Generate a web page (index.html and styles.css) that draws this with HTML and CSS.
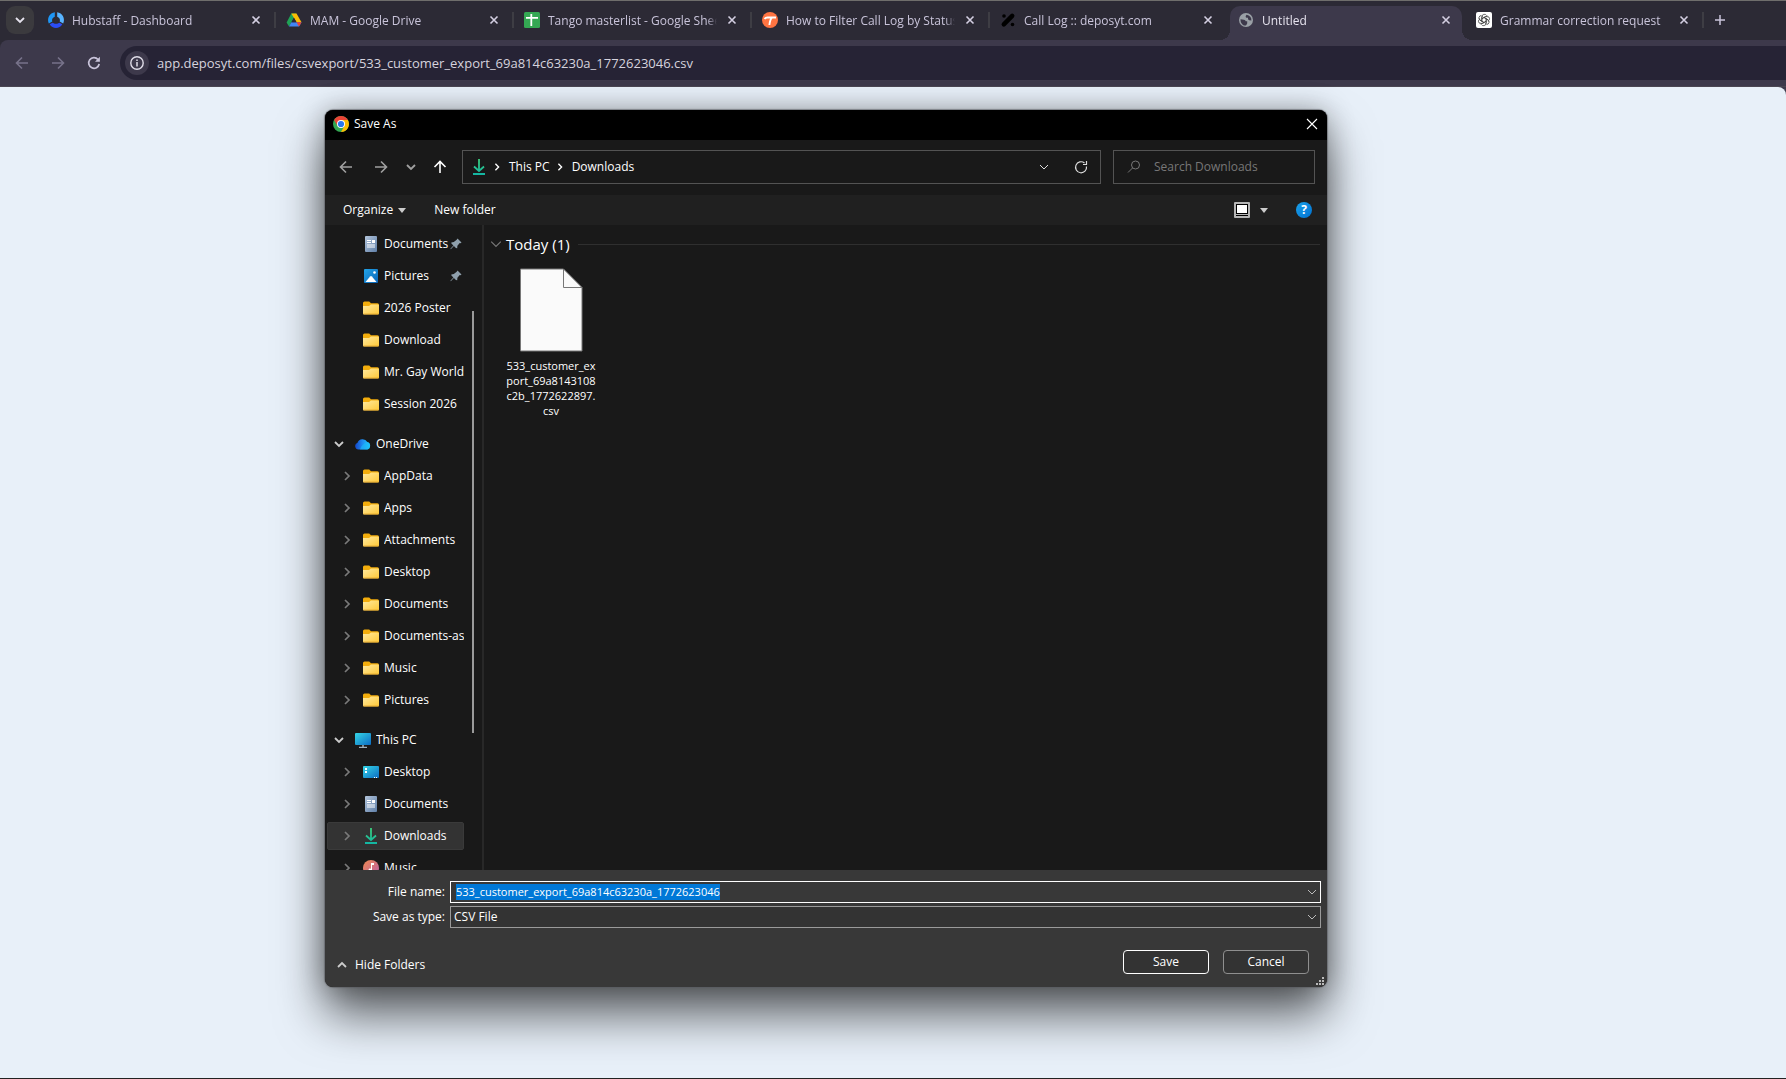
FILE: index.html
```html
<!DOCTYPE html>
<html lang="en">
<head>
<meta charset="utf-8">
<title>Untitled</title>
<link rel="stylesheet" href="styles.css">
</head>
<body>
<svg class="defs" aria-hidden="true">
  <defs>
    <linearGradient id="gFolder" x1="0" y1="0" x2="1" y2="1"><stop offset="0" stop-color="#ffe9a0"/><stop offset="1" stop-color="#ffc937"/></linearGradient>
    <linearGradient id="gDoc" x1="0" y1="0" x2="1" y2="1"><stop offset="0" stop-color="#b4c6dc"/><stop offset="1" stop-color="#5f7fa8"/></linearGradient>
    <linearGradient id="gPic" x1="0" y1="0" x2="1" y2="1"><stop offset="0" stop-color="#22a4e8"/><stop offset="1" stop-color="#0a64b8"/></linearGradient>
    <linearGradient id="gScreen" x1="0" y1="0" x2="1" y2="1"><stop offset="0" stop-color="#35d6e6"/><stop offset="1" stop-color="#0c6cc4"/></linearGradient>
    <linearGradient id="gDown" gradientUnits="userSpaceOnUse" x1="0" y1="0" x2="0" y2="16"><stop offset="0" stop-color="#3ccf7c"/><stop offset="1" stop-color="#12b5a4"/></linearGradient>
    <linearGradient id="gMusic" x1="0" y1="0" x2="1" y2="1"><stop offset="0" stop-color="#f08a50"/><stop offset="1" stop-color="#b85aa8"/></linearGradient>
    <linearGradient id="gCloud" x1="0" y1="0" x2="1" y2="0"><stop offset="0" stop-color="#1546c8"/><stop offset=".5" stop-color="#1f8df2"/><stop offset="1" stop-color="#22d0fb"/></linearGradient>
  </defs>
  <symbol id="close" viewBox="0 0 10 10"><path d="M1.500 1.500l7 7M8.500 1.500l-7 7" stroke="currentColor" stroke-width="1.600" fill="none"/></symbol>
  <symbol id="down" viewBox="0 0 10 10"><path d="M1 3l4 4 4-4" stroke="currentColor" stroke-width="1.800" fill="none"/></symbol>
  <symbol id="downThin" viewBox="0 0 10 10"><path d="M1 3l4 4 4-4" stroke="currentColor" stroke-width="1" fill="none"/></symbol>
  <symbol id="right" viewBox="0 0 10 10"><path d="M3 1l4 4-4 4" stroke="currentColor" stroke-width="1.700" fill="none"/></symbol>
  <symbol id="caret" viewBox="0 0 8 5"><path d="M0 0h8L4 5z" fill="currentColor"/></symbol>
  <symbol id="arrow" viewBox="0 0 14 14"><path d="M13 7H1.500M7 1.500L1.500 7 7 12.500" stroke="currentColor" stroke-width="1.600" fill="none"/></symbol>
  <symbol id="reload" viewBox="0 0 14 14"><path d="M12.200 8A5.300 5.300 0 1 1 11 3.500" stroke="currentColor" stroke-width="1.700" fill="none"/><path d="M12.900.8v5H8z" fill="currentColor"/></symbol>
  <symbol id="folder" viewBox="0 0 16 16"><path d="M0 3q0-1.500 1.500-1.500h4.700L8 3.200h6.500Q16 3.200 16 5v3H0z" fill="#f3ad0c"/><path d="M0 6h6l2-1.500h7.200q.8 0 .8.800v8.200q0 1-1 1H1q-1 0-1-1z" fill="url(#gFolder)"/><path d="M.5 14h15" stroke="#e3a52b" stroke-width=".8"/></symbol>
  <symbol id="doc" viewBox="0 0 16 16"><rect x="2" width="12" height="16" rx="1" fill="url(#gDoc)"/><path d="M4 4.500h4M4 6.500h4M4 9h8M4 11h8" stroke="#fff" stroke-width="1"/><rect x="9" y="4" width="3" height="3" fill="#fff"/></symbol>
  <symbol id="picture" viewBox="0 0 16 16"><rect x="1" y="1" width="14" height="14" rx="1" fill="url(#gPic)"/><path d="M2.500 14l4.600-5.500q.9-.9 1.800 0l4.600 5.500z" fill="#fff"/><circle cx="11.500" cy="4.500" r="1.300" fill="#fff"/></symbol>
  <symbol id="cloud" viewBox="0 0 16 16"><path d="M3.500 13.500A3.500 3.500 0 0 1 2.500 6.700 5.400 5.400 0 0 1 12.300 6 3.900 3.900 0 0 1 12.300 13.500z" fill="url(#gCloud)"/><path d="M5 13.500q1.500-5.500 7.300-7.500A3.900 3.900 0 0 1 12.300 13.500z" fill="#1dbcf8" opacity=".6"/></symbol>
  <symbol id="pc" viewBox="0 0 16 16"><rect y="1" width="16" height="12" rx="1" fill="url(#gScreen)"/><path d="M8 13v2.500M4 15.500h8" stroke="#9fb0bc" stroke-width="1.500"/></symbol>
  <symbol id="desktop" viewBox="0 0 16 16"><rect y="2" width="16" height="12" rx="1" fill="url(#gScreen)"/><path d="M2 4h2v2H2zM2 7h2v2H2zM11 13h1v1h-1zM13 13h1v1h-1z" fill="#fff"/></symbol>
  <symbol id="download" viewBox="0 0 16 16"><path d="M8 0v12M3 7.500l5 4.500 5-4.500M2 15h12" stroke="url(#gDown)" stroke-width="1.800" fill="none"/></symbol>
  <symbol id="music" viewBox="0 0 16 16"><circle cx="8" cy="8" r="8" fill="url(#gMusic)"/><path d="M8 3h3v2H9v5.500a1.800 1.800 0 1 1-1-1.700z" fill="#fff"/></symbol>
  <symbol id="pin" viewBox="0 0 12 12"><path d="M7.500.5l4 4-1 .8-.8-.2-2.300 2.700-.2 2.500-1.300-.2-2-2L.8 11.200l-.4-.4 3-3.200-2-2-.1-1.200 2.500-.3L6.700 1.800z" fill="#8fa0ac"/></symbol>
</svg>

<header class="browser">
  <div class="tabstrip">
    <button class="tab-search" aria-label="Search tabs"><svg width="10" height="10"><use href="#down"/></svg></button>
    <nav class="tabs" aria-label="Tabs">
      <div class="tab">
        <svg class="favicon" viewBox="0 0 16 16"><path d="M6.800.2v4.600A3.600 3.600 0 0 0 4.300 9.500L.8 11.500A8 8 0 0 1 6.800.2z" fill="#1e96f5"/><path d="M9.200.2v4.600a3.600 3.600 0 0 1 2.500 4.700l3.500 2A8 8 0 0 0 9.200.2z" fill="#58b4ff"/><path d="M3.500 11.200q1.200-.7 2.200 0 2.300 1.300 4.600 0 1-.7 2.200 0l1.800 1q-2.300 3.800-6.300 3.800t-6.300-3.800z" fill="#2b4df5"/></svg>
        <a class="tab-title" href="#">Hubstaff - Dashboard</a>
        <button class="tab-close" aria-label="Close tab"><svg width="10" height="10"><use href="#close"/></svg></button>
      </div>
      <div class="tab">
        <svg class="favicon" viewBox="0 0 16 16"><path d="M5.300 1.500h5L5.500 10 3 14.500.6 10.400z" fill="#1fa255"/><path d="M5.300 1.500h5.200l5 8.800h-5z" fill="#fbbc04"/><path d="M5.300 10.300h10.200L13 14.500H3z" fill="#4285f4"/><path d="M10.500 10.300h5L13 14.500z" fill="#ea4335"/><path d="M8 5.800l2.500 4.500h-5z" fill="#2c2a35"/></svg>
        <a class="tab-title" href="#">MAM - Google Drive</a>
        <button class="tab-close" aria-label="Close tab"><svg width="10" height="10"><use href="#close"/></svg></button>
      </div>
      <div class="tab">
        <svg class="favicon" viewBox="0 0 16 16"><rect width="16" height="16" rx="1.500" fill="#34a853"/><path d="M2 5.800h12M7.300 2v12" stroke="#fff" stroke-width="1.800"/></svg>
        <a class="tab-title" href="#">Tango masterlist - Google Sheets</a>
        <button class="tab-close" aria-label="Close tab"><svg width="10" height="10"><use href="#close"/></svg></button>
      </div>
      <div class="tab">
        <svg class="favicon" viewBox="0 0 16 16"><circle cx="8" cy="8" r="8" fill="#ff7442"/><path d="M2.500 7q1-1.500 3-1.500h8.500M10 5.700q-2 2-2.600 7.300" stroke="#fff" stroke-width="1.900" fill="none"/></svg>
        <a class="tab-title" href="#">How to Filter Call Log by Status?</a>
        <button class="tab-close" aria-label="Close tab"><svg width="10" height="10"><use href="#close"/></svg></button>
      </div>
      <div class="tab">
        <svg class="favicon" viewBox="0 0 16 16"><path d="M3.800 12.300l8.400-8.400" stroke="#000" stroke-width="4.500" stroke-linecap="round"/><circle cx="4" cy="4" r="1.800"/><circle cx="12.500" cy="12.500" r="1.800"/></svg>
        <a class="tab-title" href="#">Call Log :: deposyt.com</a>
        <button class="tab-close" aria-label="Close tab"><svg width="10" height="10"><use href="#close"/></svg></button>
      </div>
      <div class="tab active">
        <svg class="favicon" viewBox="0 0 16 16"><circle cx="8" cy="8" r="7" fill="#9aa0a6"/><path d="M2.500 7.300l3.500.4q1.500.3 1.700 1.600h1.500v2.200l-1.200 2q-1.500.4-3-.6Q2.300 11 2.500 7.300zM8.500 2.800q-1.700 2.200 0 3H10v1.500l1.200 1 2.200.2q.2-4.700-4.900-5.700z" fill="#3d394b"/></svg>
        <a class="tab-title" href="#" aria-current="page">Untitled</a>
        <button class="tab-close" aria-label="Close tab"><svg width="10" height="10"><use href="#close"/></svg></button>
      </div>
      <div class="tab">
        <svg class="favicon" viewBox="0 0 16 16"><rect width="16" height="16" rx="2" fill="#fff"/><g fill="none" stroke="#333" stroke-width=".7"><path id="petal" d="M5.800 8.800V4.800a2.600 2.600 0 0 1 4.800-1.300M5.800 6.800l3.300-1.900q1.300-.6 2.500.1"/><use href="#petal" transform="rotate(60 8 8)"/><use href="#petal" transform="rotate(120 8 8)"/><use href="#petal" transform="rotate(180 8 8)"/><use href="#petal" transform="rotate(240 8 8)"/><use href="#petal" transform="rotate(300 8 8)"/></g></svg>
        <a class="tab-title" href="#">Grammar correction request</a>
        <button class="tab-close" aria-label="Close tab"><svg width="10" height="10"><use href="#close"/></svg></button>
      </div>
    </nav>
    <button class="new-tab" aria-label="New tab"><svg width="10" height="10" viewBox="0 0 10 10"><path d="M5 0v10M0 5h10" stroke="currentColor" stroke-width="1.500"/></svg></button>
  </div>
  <div class="toolbar">
    <button class="tool dim" aria-label="Back"><svg width="14" height="14"><use href="#arrow"/></svg></button>
    <button class="tool dim" aria-label="Forward"><svg class="flip" width="14" height="14"><use href="#arrow"/></svg></button>
    <button class="tool" aria-label="Reload"><svg width="14" height="14"><use href="#reload"/></svg></button>
    <div class="omnibox">
      <button class="site-info" aria-label="Site information"><svg width="14" height="14" viewBox="0 0 14 14"><circle cx="7" cy="7" r="6.200" fill="none" stroke="currentColor" stroke-width="1.400"/><path d="M7 6v4.500M7 3.500V5" stroke="currentColor" stroke-width="1.500"/></svg></button>
      <input class="url" aria-label="Address" value="app.deposyt.com/files/csvexport/533_customer_export_69a814c63230a_1772623046.csv">
    </div>
  </div>
</header>

<main class="viewport"></main>

<section class="dialog" role="dialog" aria-labelledby="dialogTitle">
  <div class="titlebar">
    <svg width="16" height="16" viewBox="0 0 16 16"><circle cx="8" cy="8" r="8" fill="#34a853"/><path d="M1.100 4A8 8 0 0 1 14.900 4H8L4.600 10z" fill="#ea4335"/><path d="M14.900 4A8 8 0 0 1 8 16l3.400-6L8 4z" fill="#fbbc04"/><circle cx="8" cy="8" r="4" fill="#fff"/><circle cx="8" cy="8" r="3.100" fill="#2a78f0"/></svg>
    <h1 id="dialogTitle">Save As</h1>
    <button class="win-close" aria-label="Close"><svg width="12" height="12" viewBox="0 0 12 12"><path d="M1 1l10 10M11 1L1 11" stroke="#fff" stroke-width="1.100"/></svg></button>
  </div>

  <div class="navrow">
    <button class="nav" aria-label="Back"><svg width="14" height="14"><use href="#arrow"/></svg></button>
    <button class="nav forward" aria-label="Forward"><svg class="flip" width="14" height="14"><use href="#arrow"/></svg></button>
    <button class="nav small" aria-label="Recent locations"><svg width="10" height="10"><use href="#down"/></svg></button>
    <button class="nav up" aria-label="Up"><svg class="turn" width="14" height="14"><use href="#arrow"/></svg></button>
    <div class="address">
      <svg width="16" height="16"><use href="#download"/></svg>
      <svg class="crumb-sep" width="8" height="8"><use href="#right"/></svg>
      <a href="#">This PC</a>
      <svg class="crumb-sep" width="8" height="8"><use href="#right"/></svg>
      <a href="#">Downloads</a>
      <button class="addr-btn push" aria-label="Previous locations"><svg width="10" height="10"><use href="#downThin"/></svg></button>
      <button class="addr-btn" aria-label="Refresh"><svg width="14" height="14" viewBox="0 0 14 14"><path d="M12.500 6.500A5.500 5.500 0 1 1 10.500 3M12.500 1v3.500H9" stroke="currentColor" stroke-width="1.200" fill="none"/></svg></button>
    </div>
    <label class="search">
      <svg width="14" height="14" viewBox="0 0 14 14"><circle cx="8.500" cy="5" r="4" fill="none" stroke="currentColor"/><path d="M5.500 8L1 12.500" stroke="currentColor"/></svg>
      <input type="text" placeholder="Search Downloads" aria-label="Search Downloads">
    </label>
  </div>

  <div class="commands">
    <button class="cmd">Organize <svg width="8" height="5"><use href="#caret"/></svg></button>
    <button class="cmd">New folder</button>
    <button class="cmd view" aria-label="Change view"><svg width="16" height="16" viewBox="0 0 16 16"><rect width="16" height="16" rx="1" fill="#b5b5b5"/><rect x="2.500" y="2.500" width="11" height="9" fill="#fff" stroke="#000"/><path d="M2 13.500h12" stroke="#000"/></svg><svg width="8" height="5"><use href="#caret"/></svg></button>
    <button class="cmd help" aria-label="Help">?</button>
  </div>

  <div class="body">
    <aside class="sidebar">
      <ul class="tree">
        <li class="leaf"><svg width="16" height="16"><use href="#doc"/></svg><a href="#">Documents</a><svg class="pin" width="12" height="12"><use href="#pin"/></svg></li>
        <li class="leaf"><svg width="16" height="16"><use href="#picture"/></svg><a href="#">Pictures</a><svg class="pin" width="12" height="12"><use href="#pin"/></svg></li>
        <li class="leaf"><svg width="16" height="16"><use href="#folder"/></svg><a href="#">2026 Poster</a></li>
        <li class="leaf"><svg width="16" height="16"><use href="#folder"/></svg><a href="#">Download</a></li>
        <li class="leaf"><svg width="16" height="16"><use href="#folder"/></svg><a href="#">Mr. Gay World</a></li>
        <li class="leaf"><svg width="16" height="16"><use href="#folder"/></svg><a href="#">Session 2026</a></li>
      </ul>
      <ul class="tree">
        <li class="root"><svg class="chev" width="10" height="10"><use href="#down"/></svg><svg width="16" height="16"><use href="#cloud"/></svg><a href="#">OneDrive</a></li>
        <li><svg class="chev" width="10" height="10"><use href="#right"/></svg><svg width="16" height="16"><use href="#folder"/></svg><a href="#">AppData</a></li>
        <li><svg class="chev" width="10" height="10"><use href="#right"/></svg><svg width="16" height="16"><use href="#folder"/></svg><a href="#">Apps</a></li>
        <li><svg class="chev" width="10" height="10"><use href="#right"/></svg><svg width="16" height="16"><use href="#folder"/></svg><a href="#">Attachments</a></li>
        <li><svg class="chev" width="10" height="10"><use href="#right"/></svg><svg width="16" height="16"><use href="#folder"/></svg><a href="#">Desktop</a></li>
        <li><svg class="chev" width="10" height="10"><use href="#right"/></svg><svg width="16" height="16"><use href="#folder"/></svg><a href="#">Documents</a></li>
        <li><svg class="chev" width="10" height="10"><use href="#right"/></svg><svg width="16" height="16"><use href="#folder"/></svg><a href="#">Documents-ass</a></li>
        <li><svg class="chev" width="10" height="10"><use href="#right"/></svg><svg width="16" height="16"><use href="#folder"/></svg><a href="#">Music</a></li>
        <li><svg class="chev" width="10" height="10"><use href="#right"/></svg><svg width="16" height="16"><use href="#folder"/></svg><a href="#">Pictures</a></li>
      </ul>
      <ul class="tree">
        <li class="root"><svg class="chev" width="10" height="10"><use href="#down"/></svg><svg width="16" height="16"><use href="#pc"/></svg><a href="#">This PC</a></li>
        <li><svg class="chev" width="10" height="10"><use href="#right"/></svg><svg width="16" height="16"><use href="#desktop"/></svg><a href="#">Desktop</a></li>
        <li><svg class="chev" width="10" height="10"><use href="#right"/></svg><svg width="16" height="16"><use href="#doc"/></svg><a href="#">Documents</a></li>
        <li class="selected"><svg class="chev" width="10" height="10"><use href="#right"/></svg><svg width="16" height="16"><use href="#download"/></svg><a href="#">Downloads</a></li>
        <li><svg class="chev" width="10" height="10"><use href="#right"/></svg><svg width="16" height="16"><use href="#music"/></svg><a href="#">Music</a></li>
      </ul>
    </aside>
    <div class="scrollbar"><div class="thumb"></div></div>
    <div class="files">
      <h2 class="group"><svg width="12" height="12"><use href="#downThin"/></svg>Today (1)</h2>
      <a class="file" href="#">
        <svg width="64" height="84" viewBox="0 0 64 84"><path d="M1.500 1h43L63 19.500V83H1.500z" fill="#fafafa" stroke="#777"/><path d="M44.500 1v18.500H63" fill="none" stroke="#777"/></svg>
        <span>533_customer_ex<wbr>port_69a8143108<wbr>c2b_1772622897.<wbr>csv</span>
      </a>
    </div>
  </div>

  <form class="footer">
    <div class="fields">
      <label for="fileName">File name:</label>
      <div class="combo focused">
        <input id="fileName" class="file-name" type="text" value="533_customer_export_69a814c63230a_1772623046" autofocus>
        <svg width="10" height="10"><use href="#downThin"/></svg>
      </div>
      <label for="fileType">Save as type:</label>
      <div class="combo">
        <select id="fileType"><option>CSV File</option></select>
        <svg width="10" height="10"><use href="#downThin"/></svg>
      </div>
    </div>
    <div class="actions">
      <button type="button" class="hide"><svg class="upside" width="10" height="10"><use href="#down"/></svg>Hide Folders</button>
      <button type="button" class="btn primary">Save</button>
      <button type="button" class="btn">Cancel</button>
    </div>
    <svg class="grip" width="8" height="8" viewBox="0 0 8 8"><path d="M6 0h2v2H6zM3 3h2v2H3zM6 3h2v2H6zM0 6h2v2H0zM3 6h2v2H3zM6 6h2v2H6z" fill="#bbb"/></svg>
  </form>
</section>
<script src="script.js"></script>
</body>
</html>
```

FILE: styles.css
```css
* { box-sizing: border-box; }

html, body { height: 100%; }

body {
  margin: 0;
  display: flex;
  flex-direction: column;
  background: #3d394b;
  font: 12px/16px "Open Sans", "Noto Sans", sans-serif;
  color: #fff;
  overflow: hidden;
}

button, input, select { font: inherit; color: inherit; }
button { background: none; border: 0; padding: 0; display: flex; align-items: center; justify-content: center; }
a { color: inherit; text-decoration: none; }
svg { display: block; flex: none; }
.defs { position: absolute; width: 0; height: 0; }
.flip { transform: rotate(180deg); }
.turn { transform: rotate(90deg); }
.upside { transform: rotate(180deg); }

/* Browser frame */
.browser { background: #2c2a35; }
.tabstrip {
  display: flex;
  height: 40px;
  padding: 5px 6px 0;
  border-top: 1px solid #6f6e6c;
}
.tab-search { width: 28px; height: 28px; border-radius: 9px; background: #3b3a3e; color: #e6e3ee; }
.tabs { display: flex; margin-left: 3px; flex: 0 1 1666px; min-width: 0; }
.tab {
  position: relative;
  flex: 1 1 0;
  min-width: 0;
  display: flex;
  align-items: center;
  height: 28px;
  padding: 0 14px 0 11px;
  color: #c9c4da;
}
.tab::after { content: ""; position: absolute; right: -1px; top: 6px; width: 2px; height: 16px; background: #3e3d44; }
.tab:has(+ .active)::after { display: none; }
.favicon { width: 16px; height: 16px; }
.tab-title {
  flex: 1;
  margin-left: 8px;
  padding-top: 2px;
  overflow: hidden;
  white-space: nowrap;
  mask-image: linear-gradient(to right, #000 calc(100% - 10px), transparent);
}
.tab-close { width: 10px; height: 10px; margin-left: 10px; color: #d4cfe2; }
.tab.active { z-index: 0; color: #e6e3ee; }
.tab.active::before {
  content: "";
  position: absolute;
  inset: 0 3px -6px;
  background: #3d394b;
  border-radius: 10px 10px 0 0;
  z-index: -1;
}
.tab.active::after {
  inset: auto -7px -6px;
  width: auto;
  height: 10px;
  z-index: -1;
  background:
    radial-gradient(circle at 0 0, transparent 10px, #3d394b 10px) left / 10px 10px no-repeat,
    radial-gradient(circle at 100% 0, transparent 10px, #3d394b 10px) right / 10px 10px no-repeat;
}
.new-tab { width: 28px; height: 28px; margin-left: 3px; color: #c9c4da; }

.toolbar { display: flex; align-items: center; height: 47px; padding: 0 0 1px 8px; border-bottom: 1px solid #4a4652; border-radius: 8px 0 0 0; background: #3d394b; }
.tool { width: 28px; height: 28px; margin-right: 8px; color: #c9c4da; }
.tool.dim { color: #77728a; }
.omnibox { flex: 1; display: flex; align-items: center; height: 34px; margin-left: 4px; padding-left: 5px; border-radius: 17px 0 0 17px; background: #262335; }
.site-info { width: 24px; height: 24px; border-radius: 12px; background: #3d394b; color: #e0dde8; }
.url { flex: 1; margin-left: 8px; padding: 0; border: 0; outline: 0; background: none; font-size: 13px; color: #d6d3de; }

.viewport { flex: 1; background: #e8f0f9; border-radius: 0 8px 0 0; border-bottom: 1px solid #222; }

/* Save dialog window */
.dialog {
  position: absolute;
  left: 325px;
  top: 110px;
  width: 1002px;
  display: flex;
  flex-direction: column;
  border-radius: 8px;
  overflow: hidden;
  background: #191919;
  box-shadow: 0 0 1px 1px rgba(90, 92, 96, .6), 0 28px 48px rgba(0, 0, 0, .6), 0 0 28px rgba(0, 0, 0, .3);
}
.titlebar { display: flex; align-items: center; height: 30px; padding: 0 9px 2px 8px; background: #000; }
.titlebar h1 { margin: 0 0 0 5px; flex: 1; font-size: 12px; line-height: 16px; font-weight: 400; }

.navrow { display: flex; align-items: center; height: 55px; padding: 0 12px 1px 14px; color: #a0a0a0; }
.nav { width: 14px; height: 14px; margin-right: 21px; }
.nav.forward { margin-right: 18px; }
.nav.small { width: 10px; margin-right: 17px; }
.nav.up { margin-right: 15px; color: #fff; }
.address { flex: 1; display: flex; align-items: center; height: 34px; padding: 0 12px 0 8px; border: 1px solid #535353; color: #fff; }
.crumb-sep { margin: 0 8px 0 6px; }
.address .addr-btn { width: 14px; height: 14px; margin-left: 23px; color: #ddd; }
.address .push { margin-left: auto; }
.search { flex: none; display: flex; align-items: center; width: 202px; height: 34px; margin-left: 12px; padding: 0 13px; border: 1px solid #535353; color: #777; }
.search input { flex: 1; min-width: 0; margin-left: 13px; padding: 0; border: 0; outline: 0; background: none; }
.search input::placeholder { color: #777; opacity: 1; }

.commands { display: flex; align-items: center; height: 30px; padding: 0 15px 0 18px; background: #202020; }
.cmd { gap: 5px; margin-right: 28px; }
.cmd svg { color: #ccc; }
.view { gap: 10px; margin-left: auto; }
.cmd.help { width: 16px; height: 16px; margin-right: 0; border-radius: 8px; background: linear-gradient(135deg, #1ba2ea, #0070d0); font-weight: 700; }

.body { display: flex; height: 645px; overflow: hidden; }
.sidebar { width: 139px; padding: 3px 0 0 2px; overflow: hidden; }
.tree { margin: 0 0 12px; padding: 0; list-style: none; }
.tree li { display: flex; align-items: center; height: 28px; margin: 2px 0 4px; padding-left: 15px; white-space: nowrap; }
.tree .root { padding-left: 7px; }
.tree .leaf { padding-left: 36px; }
.tree .chev { margin-right: 11px; color: #7a7a7a; }
.tree .root .chev { color: #ccc; }
.tree a { flex: 1; min-width: 0; margin-left: 5px; overflow: hidden; }
.tree .pin { margin-right: 2px; }
.tree .selected { border: 1px solid #3a3a3a; border-radius: 2px; padding-left: 14px; background: #333; }

.scrollbar { width: 20px; padding: 86px 0 0 8px; border-right: 2px solid #282828; }
.thumb { width: 2px; height: 422px; background: #9a9a9a; }

.files { flex: 1; padding: 11px 7px 0 6px; }
.group { display: flex; align-items: center; margin: 0; font-size: 15px; line-height: 16px; font-weight: 400; }
.group svg { margin-right: 4px; color: #777; }
.group::after { content: ""; flex: 1; height: 1px; margin-left: 8px; background: #2f2f2f; }
.file { display: flex; flex-direction: column; align-items: center; width: 100px; margin: 16px 0 0 11px; }
.file span { margin-top: 6px; text-align: center; font-size: 11px; line-height: 15px; }

.footer { position: relative; padding: 11px 6px 13px 12px; background: #383838; }
.fields { display: grid; grid-template-columns: 108px 1fr; gap: 3px 5px; align-items: center; }
.fields label { text-align: right; }
.combo { display: flex; align-items: center; height: 22px; padding-right: 3px; border: 1px solid #9a9a9a; background: #333; color: #bbb; }
.combo.focused { border-color: #fff; background: #383838; }
.combo input, .combo select { flex: 1; min-width: 0; height: 16px; padding: 0 0 0 5px; border: 0; outline: 0; background: none; color: #fff; appearance: none; }
.combo select { padding-left: 3px; line-height: 16px; }
.combo .file-name { font-size: 11px; }
.file-name::selection { background: #0078d7; color: #fff; }
.actions { display: flex; align-items: center; margin-top: 22px; padding-right: 12px; }
.hide { gap: 8px; margin-right: auto; padding-top: 6px; }
.hide svg { color: #ccc; }
.btn { width: 86px; height: 24px; margin-left: 14px; border: 1px solid #8f8f8f; border-radius: 4px; background: #333; }
.btn.primary { border-color: #fff; }
.grip { position: absolute; right: 3px; bottom: 2px; }
```

FILE: script.js
```js
const fileName = document.getElementById('fileName');
fileName.focus();
fileName.select();
```
